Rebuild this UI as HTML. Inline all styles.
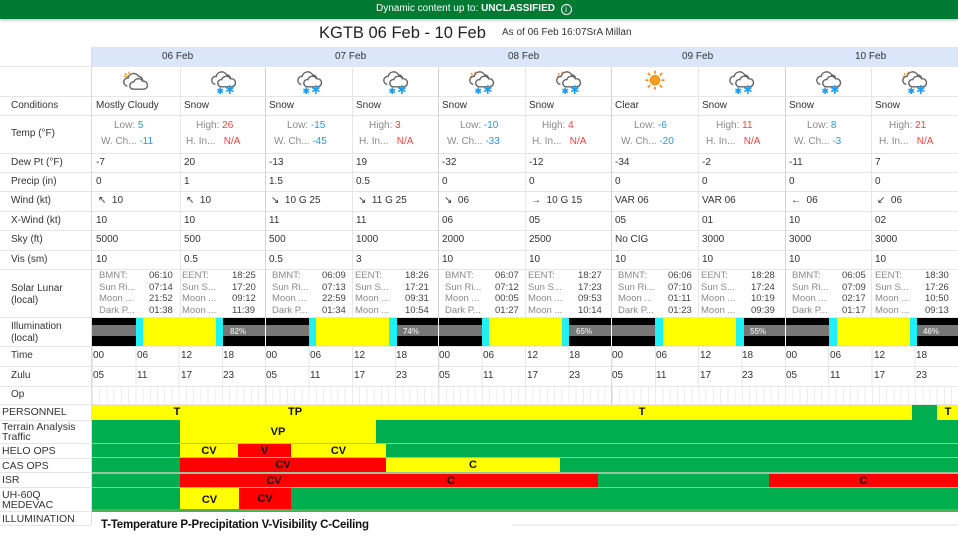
<!DOCTYPE html>
<html><head><meta charset="utf-8"><style>
*{margin:0;padding:0;box-sizing:border-box}
body{width:958px;height:536px;overflow:hidden;background:#fff;font-family:"Liberation Sans",sans-serif;position:relative;color:#333}
.a{position:absolute;white-space:nowrap}
.t{position:absolute;white-space:nowrap;font-size:10px;line-height:12px;color:#333}
.h{position:absolute;height:1px;background:#e6e6e6}
.v{position:absolute;width:1px;background:#e6e6e6}
.g{color:#8a8a8a}.bl{color:#2b95ea}.rd{color:#f0443a}
.s{position:absolute;font-size:9.5px;line-height:11px;white-space:nowrap}
.b{position:absolute;font:bold 11px "Liberation Sans",sans-serif;color:#111;display:flex;align-items:center;justify-content:center}
.lb{position:absolute;left:2px;font-size:10.5px;line-height:10px;color:#333}
</style></head><body>
<svg width="0" height="0" style="position:absolute">
<defs>
<symbol id="cl" viewBox="0 0 40 30"><path d="M8 20a5 5 0 0 1 1-10a7 7 0 0 1 13-2a5 5 0 0 1 5 5" fill="#fff" stroke="#666" stroke-width="1.8"/><path d="M15 24a4.5 4.5 0 0 1 1-9a6 6 0 0 1 11-1a5 5 0 0 1 2 10z" fill="#fff" stroke="#666" stroke-width="1.8"/></symbol>
<symbol id="sn" viewBox="0 0 40 30"><path d="M8 18a5 5 0 0 1 1-10a7 7 0 0 1 13-2a5 5 0 0 1 5 5" fill="#fff" stroke="#666" stroke-width="1.8"/><path d="M15 21a4.5 4.5 0 0 1 1-9a6 6 0 0 1 11-1a5 5 0 0 1 2 10z" fill="#fff" stroke="#666" stroke-width="1.8"/><g stroke="#1e9bf0" stroke-width="2"><path d="M14 22v8M10.5 24l7 4M10.5 28l7-4"/><path d="M26 19v11M21.5 22l9 5M21.5 27l9-5"/></g></symbol>
<symbol id="sun" viewBox="0 0 40 30"><circle cx="20" cy="14" r="6" fill="#f7a21b" stroke="#f07b0f"/><g stroke="#f58b10" stroke-width="2"><path d="M20 2v4M20 22v4M8 14h4M28 14h4M11 5l3 3M29 5l-3 3M11 23l3-3M29 23l-3-3"/></g></symbol>
<symbol id="ps" viewBox="0 0 40 30"><g stroke="#f58b10" stroke-width="1.5"><path d="M10 2v3M4 8h3M5 4l2 2M14 4l-2 2"/></g><circle cx="10" cy="10" r="3.5" fill="#f7a21b"/></symbol>
</defs></svg>

<div class="a" style="left:0;top:0;width:958px;height:19px;background:#007a33;box-shadow:0 1px 3px rgba(0,0,0,.3)"></div>
<div class="a" style="left:376px;top:3px;font-size:10px;color:#fff">Dynamic content up to: <b>UNCLASSIFIED</b> &nbsp;<span style="display:inline-block;width:11px;height:11px;border:1px solid #fff;border-radius:50%;font-size:8px;line-height:9px;text-align:center;vertical-align:-1px">i</span></div>
<div class="a" style="left:319px;top:24px;font-size:16.5px;color:#222">KGTB 06 Feb - 10 Feb</div>
<div class="a" style="left:502px;top:27px;font-size:10px;color:#333">As of 06 Feb 16:07SrA Millan</div>

<div class="a" style="left:92px;top:47px;width:866px;height:20px;background:#dae7fb"></div>
<div class="t" style="left:162px;top:51px">06 Feb</div>
<div class="t" style="left:335px;top:51px">07 Feb</div>
<div class="t" style="left:508px;top:51px">08 Feb</div>
<div class="t" style="left:682px;top:51px">09 Feb</div>
<div class="t" style="left:855px;top:51px">10 Feb</div>

<div class="h" style="left:0;top:66px;width:958px"></div>
<div class="h" style="left:0;top:96px;width:958px"></div>
<div class="h" style="left:0;top:115px;width:958px"></div>
<div class="h" style="left:0;top:153px;width:958px"></div>
<div class="h" style="left:0;top:172px;width:958px"></div>
<div class="h" style="left:0;top:191px;width:958px"></div>
<div class="h" style="left:0;top:211px;width:958px"></div>
<div class="h" style="left:0;top:230px;width:958px"></div>
<div class="h" style="left:0;top:250px;width:958px"></div>
<div class="h" style="left:0;top:269px;width:958px"></div>
<div class="h" style="left:0;top:317px;width:958px"></div>
<div class="h" style="left:0;top:346px;width:958px"></div>
<div class="h" style="left:0;top:366px;width:958px"></div>
<div class="h" style="left:0;top:386px;width:958px"></div>
<div class="h" style="left:0;top:404px;width:958px"></div>
<div class="v" style="left:91px;top:47px;height:478px;background:#ddd"></div>
<div class="v" style="left:265px;top:67px;height:337px;background:#d4d4d4"></div>
<div class="v" style="left:438px;top:67px;height:337px;background:#d4d4d4"></div>
<div class="v" style="left:611px;top:67px;height:337px;background:#d4d4d4"></div>
<div class="v" style="left:785px;top:67px;height:337px;background:#d4d4d4"></div>
<div class="v" style="left:180px;top:67px;height:250px"></div>
<div class="v" style="left:352px;top:67px;height:250px"></div>
<div class="v" style="left:525px;top:67px;height:250px"></div>
<div class="v" style="left:698px;top:67px;height:250px"></div>
<div class="v" style="left:871px;top:67px;height:250px"></div>
<div class="a" style="left:92px;top:346px;width:866px;height:40px;background:repeating-linear-gradient(90deg,#e6e6e6 0 1px,transparent 1px 43.3px)"></div>
<div class="a" style="left:92px;top:386px;width:866px;height:18px;background:repeating-linear-gradient(90deg,#ececec 0 1px,transparent 1px 7.22px)"></div>

<div class="t" style="left:11px;top:100px">Conditions</div>
<div class="t" style="left:11px;top:128px">Temp (°F)</div>
<div class="t" style="left:11px;top:157px">Dew Pt (°F)</div>
<div class="t" style="left:11px;top:176px">Precip (in)</div>
<div class="t" style="left:11px;top:195px">Wind (kt)</div>
<div class="t" style="left:11px;top:215px">X-Wind (kt)</div>
<div class="t" style="left:11px;top:234px">Sky (ft)</div>
<div class="t" style="left:11px;top:254px">Vis (sm)</div>
<div class="t" style="left:11px;top:283px">Solar Lunar<br>(local)</div>
<div class="t" style="left:11px;top:321px">Illumination<br>(local)</div>
<div class="t" style="left:11px;top:350px">Time</div>
<div class="t" style="left:11px;top:370px">Zulu</div>
<div class="t" style="left:11px;top:389px">Op</div>

<svg class="a" style="left:121px;top:70px" width="32" height="24"><use href="#ps"/><use href="#cl"/></svg>
<svg class="a" style="left:209px;top:70px" width="32" height="24"><use href="#sn"/></svg>
<svg class="a" style="left:295px;top:70px" width="32" height="24"><use href="#sn"/></svg>
<svg class="a" style="left:381px;top:70px" width="32" height="24"><use href="#sn"/></svg>
<svg class="a" style="left:467px;top:70px" width="32" height="24"><use href="#ps"/><use href="#sn"/></svg>
<svg class="a" style="left:554px;top:70px" width="32" height="24"><use href="#ps"/><use href="#sn"/></svg>
<svg class="a" style="left:639px;top:69px" width="32" height="24"><use href="#sun"/></svg>
<svg class="a" style="left:727px;top:70px" width="32" height="24"><use href="#sn"/></svg>
<svg class="a" style="left:814px;top:70px" width="32" height="24"><use href="#sn"/></svg>
<svg class="a" style="left:900px;top:70px" width="32" height="24"><use href="#ps"/><use href="#sn"/></svg>

<div class="t" style="left:96px;top:100px">Mostly Cloudy</div>
<div class="t" style="left:184px;top:100px">Snow</div>
<div class="t" style="left:269px;top:100px">Snow</div>
<div class="t" style="left:356px;top:100px">Snow</div>
<div class="t" style="left:442px;top:100px">Snow</div>
<div class="t" style="left:529px;top:100px">Snow</div>
<div class="t" style="left:615px;top:100px">Clear</div>
<div class="t" style="left:702px;top:100px">Snow</div>
<div class="t" style="left:789px;top:100px">Snow</div>
<div class="t" style="left:875px;top:100px">Snow</div>

<div class="t" style="left:114px;top:120px"><span class="g">Low:</span> <span class="bl">5</span></div>
<div class="t" style="left:101px;top:136px"><span class="g">W. Ch...</span> <span class="bl">-11</span></div>
<div class="t" style="left:196px;top:120px"><span class="g">High:</span> <span class="rd">26</span></div>
<div class="t" style="left:186px;top:136px"><span class="g">H. In...</span> &nbsp; <span class="rd">N/A</span></div>
<div class="t" style="left:287px;top:120px"><span class="g">Low:</span> <span class="bl">-15</span></div>
<div class="t" style="left:274px;top:136px"><span class="g">W. Ch...</span> <span class="bl">-45</span></div>
<div class="t" style="left:369px;top:120px"><span class="g">High:</span> <span class="rd">3</span></div>
<div class="t" style="left:359px;top:136px"><span class="g">H. In...</span> &nbsp; <span class="rd">N/A</span></div>
<div class="t" style="left:460px;top:120px"><span class="g">Low:</span> <span class="bl">-10</span></div>
<div class="t" style="left:447px;top:136px"><span class="g">W. Ch...</span> <span class="bl">-33</span></div>
<div class="t" style="left:542px;top:120px"><span class="g">High:</span> <span class="rd">4</span></div>
<div class="t" style="left:532px;top:136px"><span class="g">H. In...</span> &nbsp; <span class="rd">N/A</span></div>
<div class="t" style="left:634px;top:120px"><span class="g">Low:</span> <span class="bl">-6</span></div>
<div class="t" style="left:621px;top:136px"><span class="g">W. Ch...</span> <span class="bl">-20</span></div>
<div class="t" style="left:716px;top:120px"><span class="g">High:</span> <span class="rd">11</span></div>
<div class="t" style="left:706px;top:136px"><span class="g">H. In...</span> &nbsp; <span class="rd">N/A</span></div>
<div class="t" style="left:807px;top:120px"><span class="g">Low:</span> <span class="bl">8</span></div>
<div class="t" style="left:794px;top:136px"><span class="g">W. Ch...</span> <span class="bl">-3</span></div>
<div class="t" style="left:889px;top:120px"><span class="g">High:</span> <span class="rd">21</span></div>
<div class="t" style="left:879px;top:136px"><span class="g">H. In...</span> &nbsp; <span class="rd">N/A</span></div>

<div class="t" style="left:96px;top:157px">-7</div><div class="t" style="left:184px;top:157px">20</div>
<div class="t" style="left:269px;top:157px">-13</div><div class="t" style="left:356px;top:157px">19</div>
<div class="t" style="left:442px;top:157px">-32</div><div class="t" style="left:529px;top:157px">-12</div>
<div class="t" style="left:615px;top:157px">-34</div><div class="t" style="left:702px;top:157px">-2</div>
<div class="t" style="left:789px;top:157px">-11</div><div class="t" style="left:875px;top:157px">7</div>
<div class="t" style="left:96px;top:176px">0</div><div class="t" style="left:184px;top:176px">1</div>
<div class="t" style="left:269px;top:176px">1.5</div><div class="t" style="left:356px;top:176px">0.5</div>
<div class="t" style="left:442px;top:176px">0</div><div class="t" style="left:529px;top:176px">0</div>
<div class="t" style="left:615px;top:176px">0</div><div class="t" style="left:702px;top:176px">0</div>
<div class="t" style="left:789px;top:176px">0</div><div class="t" style="left:875px;top:176px">0</div>
<div class="t" style="left:98px;top:195px">↖ &nbsp;10</div><div class="t" style="left:186px;top:195px">↖ &nbsp;10</div>
<div class="t" style="left:271px;top:195px">↘ &nbsp;10 G 25</div><div class="t" style="left:358px;top:195px">↘ &nbsp;11 G 25</div>
<div class="t" style="left:444px;top:195px">↘ &nbsp;06</div><div class="t" style="left:531px;top:195px">→ &nbsp;10 G 15</div>
<div class="t" style="left:615px;top:195px">VAR 06</div><div class="t" style="left:702px;top:195px">VAR 06</div>
<div class="t" style="left:791px;top:195px">← &nbsp;06</div><div class="t" style="left:877px;top:195px">↙ &nbsp;06</div>
<div class="t" style="left:96px;top:215px">10</div><div class="t" style="left:184px;top:215px">10</div>
<div class="t" style="left:269px;top:215px">11</div><div class="t" style="left:356px;top:215px">11</div>
<div class="t" style="left:442px;top:215px">06</div><div class="t" style="left:529px;top:215px">05</div>
<div class="t" style="left:615px;top:215px">05</div><div class="t" style="left:702px;top:215px">01</div>
<div class="t" style="left:789px;top:215px">10</div><div class="t" style="left:875px;top:215px">02</div>
<div class="t" style="left:96px;top:234px">5000</div><div class="t" style="left:184px;top:234px">500</div>
<div class="t" style="left:269px;top:234px">500</div><div class="t" style="left:356px;top:234px">1000</div>
<div class="t" style="left:442px;top:234px">2000</div><div class="t" style="left:529px;top:234px">2500</div>
<div class="t" style="left:615px;top:234px">No CIG</div><div class="t" style="left:702px;top:234px">3000</div>
<div class="t" style="left:789px;top:234px">3000</div><div class="t" style="left:875px;top:234px">3000</div>
<div class="t" style="left:96px;top:254px">10</div><div class="t" style="left:184px;top:254px">0.5</div>
<div class="t" style="left:269px;top:254px">0.5</div><div class="t" style="left:356px;top:254px">3</div>
<div class="t" style="left:442px;top:254px">10</div><div class="t" style="left:529px;top:254px">10</div>
<div class="t" style="left:615px;top:254px">10</div><div class="t" style="left:702px;top:254px">10</div>
<div class="t" style="left:789px;top:254px">10</div><div class="t" style="left:875px;top:254px">10</div>

<div class="s g" style="left:99px;top:270px;line-height:11.7px">BMNT:<br>Sun Ri...<br>Moon ...<br>Dark P...</div>
<div class="s" style="left:149px;top:270px;line-height:11.7px;color:#444">06:10<br>07:14<br>21:52<br>01:38</div>
<div class="s g" style="left:182px;top:270px;line-height:11.7px">EENT:<br>Sun S...<br>Moon ...<br>Moon ...</div>
<div class="s" style="left:232px;top:270px;line-height:11.7px;color:#444">18:25<br>17:20<br>09:12<br>11:39</div>
<div class="s g" style="left:272px;top:270px;line-height:11.7px">BMNT:<br>Sun Ri...<br>Moon ...<br>Dark P...</div>
<div class="s" style="left:322px;top:270px;line-height:11.7px;color:#444">06:09<br>07:13<br>22:59<br>01:34</div>
<div class="s g" style="left:355px;top:270px;line-height:11.7px">EENT:<br>Sun S...<br>Moon ...<br>Moon ...</div>
<div class="s" style="left:405px;top:270px;line-height:11.7px;color:#444">18:26<br>17:21<br>09:31<br>10:54</div>
<div class="s g" style="left:445px;top:270px;line-height:11.7px">BMNT:<br>Sun Ri...<br>Moon ...<br>Dark P...</div>
<div class="s" style="left:495px;top:270px;line-height:11.7px;color:#444">06:07<br>07:12<br>00:05<br>01:27</div>
<div class="s g" style="left:528px;top:270px;line-height:11.7px">EENT:<br>Sun S...<br>Moon ...<br>Moon ...</div>
<div class="s" style="left:578px;top:270px;line-height:11.7px;color:#444">18:27<br>17:23<br>09:53<br>10:14</div>
<div class="s g" style="left:618px;top:270px;line-height:11.7px">BMNT:<br>Sun Ri...<br>Moon ...<br>Dark P...</div>
<div class="s" style="left:668px;top:270px;line-height:11.7px;color:#444">06:06<br>07:10<br>01:11<br>01:23</div>
<div class="s g" style="left:701px;top:270px;line-height:11.7px">EENT:<br>Sun S...<br>Moon ...<br>Moon ...</div>
<div class="s" style="left:751px;top:270px;line-height:11.7px;color:#444">18:28<br>17:24<br>10:19<br>09:39</div>
<div class="s g" style="left:792px;top:270px;line-height:11.7px">BMNT:<br>Sun Ri...<br>Moon ...<br>Dark P...</div>
<div class="s" style="left:842px;top:270px;line-height:11.7px;color:#444">06:05<br>07:09<br>02:17<br>01:17</div>
<div class="s g" style="left:875px;top:270px;line-height:11.7px">EENT:<br>Sun S...<br>Moon ...<br>Moon ...</div>
<div class="s" style="left:925px;top:270px;line-height:11.7px;color:#444">18:30<br>17:26<br>10:50<br>09:13</div>

<div class="a" style="left:92px;top:318px;width:866px;height:28px;background:linear-gradient(#000 0 7px,#777 7px 18px,#000 18px)"></div>
<div class="a" style="left:136px;top:318px;width:7px;height:28px;background:#1ef0f5"></div><div class="a" style="left:143px;top:318px;width:73px;height:28px;background:#ff0"></div><div class="a" style="left:216px;top:318px;width:7px;height:28px;background:#1ef0f5"></div>
<div class="a" style="left:309px;top:318px;width:7px;height:28px;background:#1ef0f5"></div><div class="a" style="left:316px;top:318px;width:73px;height:28px;background:#ff0"></div><div class="a" style="left:389px;top:318px;width:8px;height:28px;background:#1ef0f5"></div>
<div class="a" style="left:482px;top:318px;width:7px;height:28px;background:#1ef0f5"></div><div class="a" style="left:489px;top:318px;width:73px;height:28px;background:#ff0"></div><div class="a" style="left:562px;top:318px;width:7px;height:28px;background:#1ef0f5"></div>
<div class="a" style="left:655px;top:318px;width:8px;height:28px;background:#1ef0f5"></div><div class="a" style="left:663px;top:318px;width:73px;height:28px;background:#ff0"></div><div class="a" style="left:736px;top:318px;width:8px;height:28px;background:#1ef0f5"></div>
<div class="a" style="left:829px;top:318px;width:8px;height:28px;background:#1ef0f5"></div><div class="a" style="left:837px;top:318px;width:73px;height:28px;background:#ff0"></div><div class="a" style="left:910px;top:318px;width:7px;height:28px;background:#1ef0f5"></div>
<div class="a" style="left:265px;top:318px;width:1px;height:28px;background:#fff"></div>
<div class="a" style="left:438px;top:318px;width:1px;height:28px;background:#fff"></div>
<div class="a" style="left:611px;top:318px;width:1px;height:28px;background:#fff"></div>
<div class="a" style="left:785px;top:318px;width:1px;height:28px;background:#fff"></div>
<div class="a" style="left:230px;top:327px;font:bold 8px 'Liberation Sans';color:#ddd">82%</div>
<div class="a" style="left:403px;top:327px;font:bold 8px 'Liberation Sans';color:#ddd">74%</div>
<div class="a" style="left:576px;top:327px;font:bold 8px 'Liberation Sans';color:#ddd">65%</div>
<div class="a" style="left:750px;top:327px;font:bold 8px 'Liberation Sans';color:#ddd">55%</div>
<div class="a" style="left:923px;top:327px;font:bold 8px 'Liberation Sans';color:#ddd">46%</div>

<div class="t" style="left:93px;top:350px">00</div><div class="t" style="left:137px;top:350px">06</div><div class="t" style="left:181px;top:350px">12</div><div class="t" style="left:223px;top:350px">18</div>
<div class="t" style="left:266px;top:350px">00</div><div class="t" style="left:310px;top:350px">06</div><div class="t" style="left:354px;top:350px">12</div><div class="t" style="left:396px;top:350px">18</div>
<div class="t" style="left:439px;top:350px">00</div><div class="t" style="left:483px;top:350px">06</div><div class="t" style="left:527px;top:350px">12</div><div class="t" style="left:569px;top:350px">18</div>
<div class="t" style="left:612px;top:350px">00</div><div class="t" style="left:656px;top:350px">06</div><div class="t" style="left:700px;top:350px">12</div><div class="t" style="left:742px;top:350px">18</div>
<div class="t" style="left:786px;top:350px">00</div><div class="t" style="left:830px;top:350px">06</div><div class="t" style="left:874px;top:350px">12</div><div class="t" style="left:916px;top:350px">18</div>
<div class="t" style="left:93px;top:370px">05</div><div class="t" style="left:137px;top:370px">11</div><div class="t" style="left:181px;top:370px">17</div><div class="t" style="left:223px;top:370px">23</div>
<div class="t" style="left:266px;top:370px">05</div><div class="t" style="left:310px;top:370px">11</div><div class="t" style="left:354px;top:370px">17</div><div class="t" style="left:396px;top:370px">23</div>
<div class="t" style="left:439px;top:370px">05</div><div class="t" style="left:483px;top:370px">11</div><div class="t" style="left:527px;top:370px">17</div><div class="t" style="left:569px;top:370px">23</div>
<div class="t" style="left:612px;top:370px">05</div><div class="t" style="left:656px;top:370px">11</div><div class="t" style="left:700px;top:370px">17</div><div class="t" style="left:742px;top:370px">23</div>
<div class="t" style="left:786px;top:370px">05</div><div class="t" style="left:830px;top:370px">11</div><div class="t" style="left:874px;top:370px">17</div><div class="t" style="left:916px;top:370px">23</div>

<div class="lb" style="top:407px">PERSONNEL</div>
<div class="lb" style="top:422px">Terrain Analysis<br>Traffic</div>
<div class="lb" style="top:446px">HELO OPS</div>
<div class="lb" style="top:461px">CAS OPS</div>
<div class="lb" style="top:475px">ISR</div>
<div class="lb" style="top:490px">UH-60Q<br>MEDEVAC</div>
<div class="lb" style="top:514px">ILLUMINATION</div>
<div class="h" style="left:0;top:420px;width:91px"></div>
<div class="h" style="left:0;top:443px;width:91px"></div>
<div class="h" style="left:0;top:458px;width:91px"></div>
<div class="h" style="left:0;top:472px;width:91px"></div>
<div class="h" style="left:0;top:487px;width:91px"></div>
<div class="h" style="left:0;top:511px;width:91px"></div>
<div class="h" style="left:0;top:525px;width:91px"></div>

<div class="a" style="left:92px;top:420px;width:866px;height:91px;background:#00ad4f"></div>
<div class="a" style="left:92px;top:443px;width:866px;height:1px;background:#9cc49c"></div>
<div class="a" style="left:92px;top:457px;width:866px;height:1px;background:#9cc49c"></div>
<div class="a" style="left:92px;top:472px;width:866px;height:2px;background:#9cc49c"></div>
<div class="a" style="left:92px;top:487px;width:866px;height:1px;background:#9cc49c"></div>
<div class="a" style="left:92px;top:509px;width:866px;height:3px;background:#4cb050"></div>
<div class="a" style="left:92px;top:405px;width:866px;height:15px;background:#ff0"></div>
<div class="a" style="left:912px;top:405px;width:25px;height:15px;background:#00ad4f"></div>
<div class="b" style="left:170px;top:405px;width:14px;height:14px">T</div>
<div class="b" style="left:285px;top:405px;width:20px;height:14px">TP</div>
<div class="b" style="left:635px;top:405px;width:14px;height:14px">T</div>
<div class="b" style="left:941px;top:405px;width:14px;height:14px">T</div>
<div class="b" style="left:180px;top:420px;width:196px;height:23px;background:#ff0">VP</div>
<div class="b" style="left:180px;top:444px;width:58px;height:13px;background:#ff0">CV</div>
<div class="b" style="left:238px;top:444px;width:53px;height:13px;background:#f00">V</div>
<div class="b" style="left:291px;top:444px;width:95px;height:13px;background:#ff0">CV</div>
<div class="b" style="left:180px;top:458px;width:206px;height:14px;background:#f00">CV</div>
<div class="b" style="left:386px;top:458px;width:174px;height:14px;background:#ff0">C</div>
<div class="a" style="left:180px;top:474px;width:418px;height:13px;background:#f00"></div>
<div class="b" style="left:264px;top:474px;width:20px;height:13px">CV</div>
<div class="b" style="left:444px;top:474px;width:14px;height:13px">C</div>
<div class="b" style="left:769px;top:474px;width:189px;height:13px;background:#f00">C</div>
<div class="b" style="left:180px;top:488px;width:59px;height:21px;background:#ff0;padding-top:3px">CV</div>
<div class="b" style="left:239px;top:488px;width:52px;height:21px;background:#f00">CV</div>

<div class="a" style="left:512px;top:524px;width:446px;height:2px;background:#f0f0f0"></div>
<div class="a" style="left:101px;top:519px;font:bold 11.5px 'Liberation Sans',sans-serif;color:#111;letter-spacing:-0.2px">T-Temperature P-Precipitation V-Visibility C-Ceiling</div>
</body></html>
